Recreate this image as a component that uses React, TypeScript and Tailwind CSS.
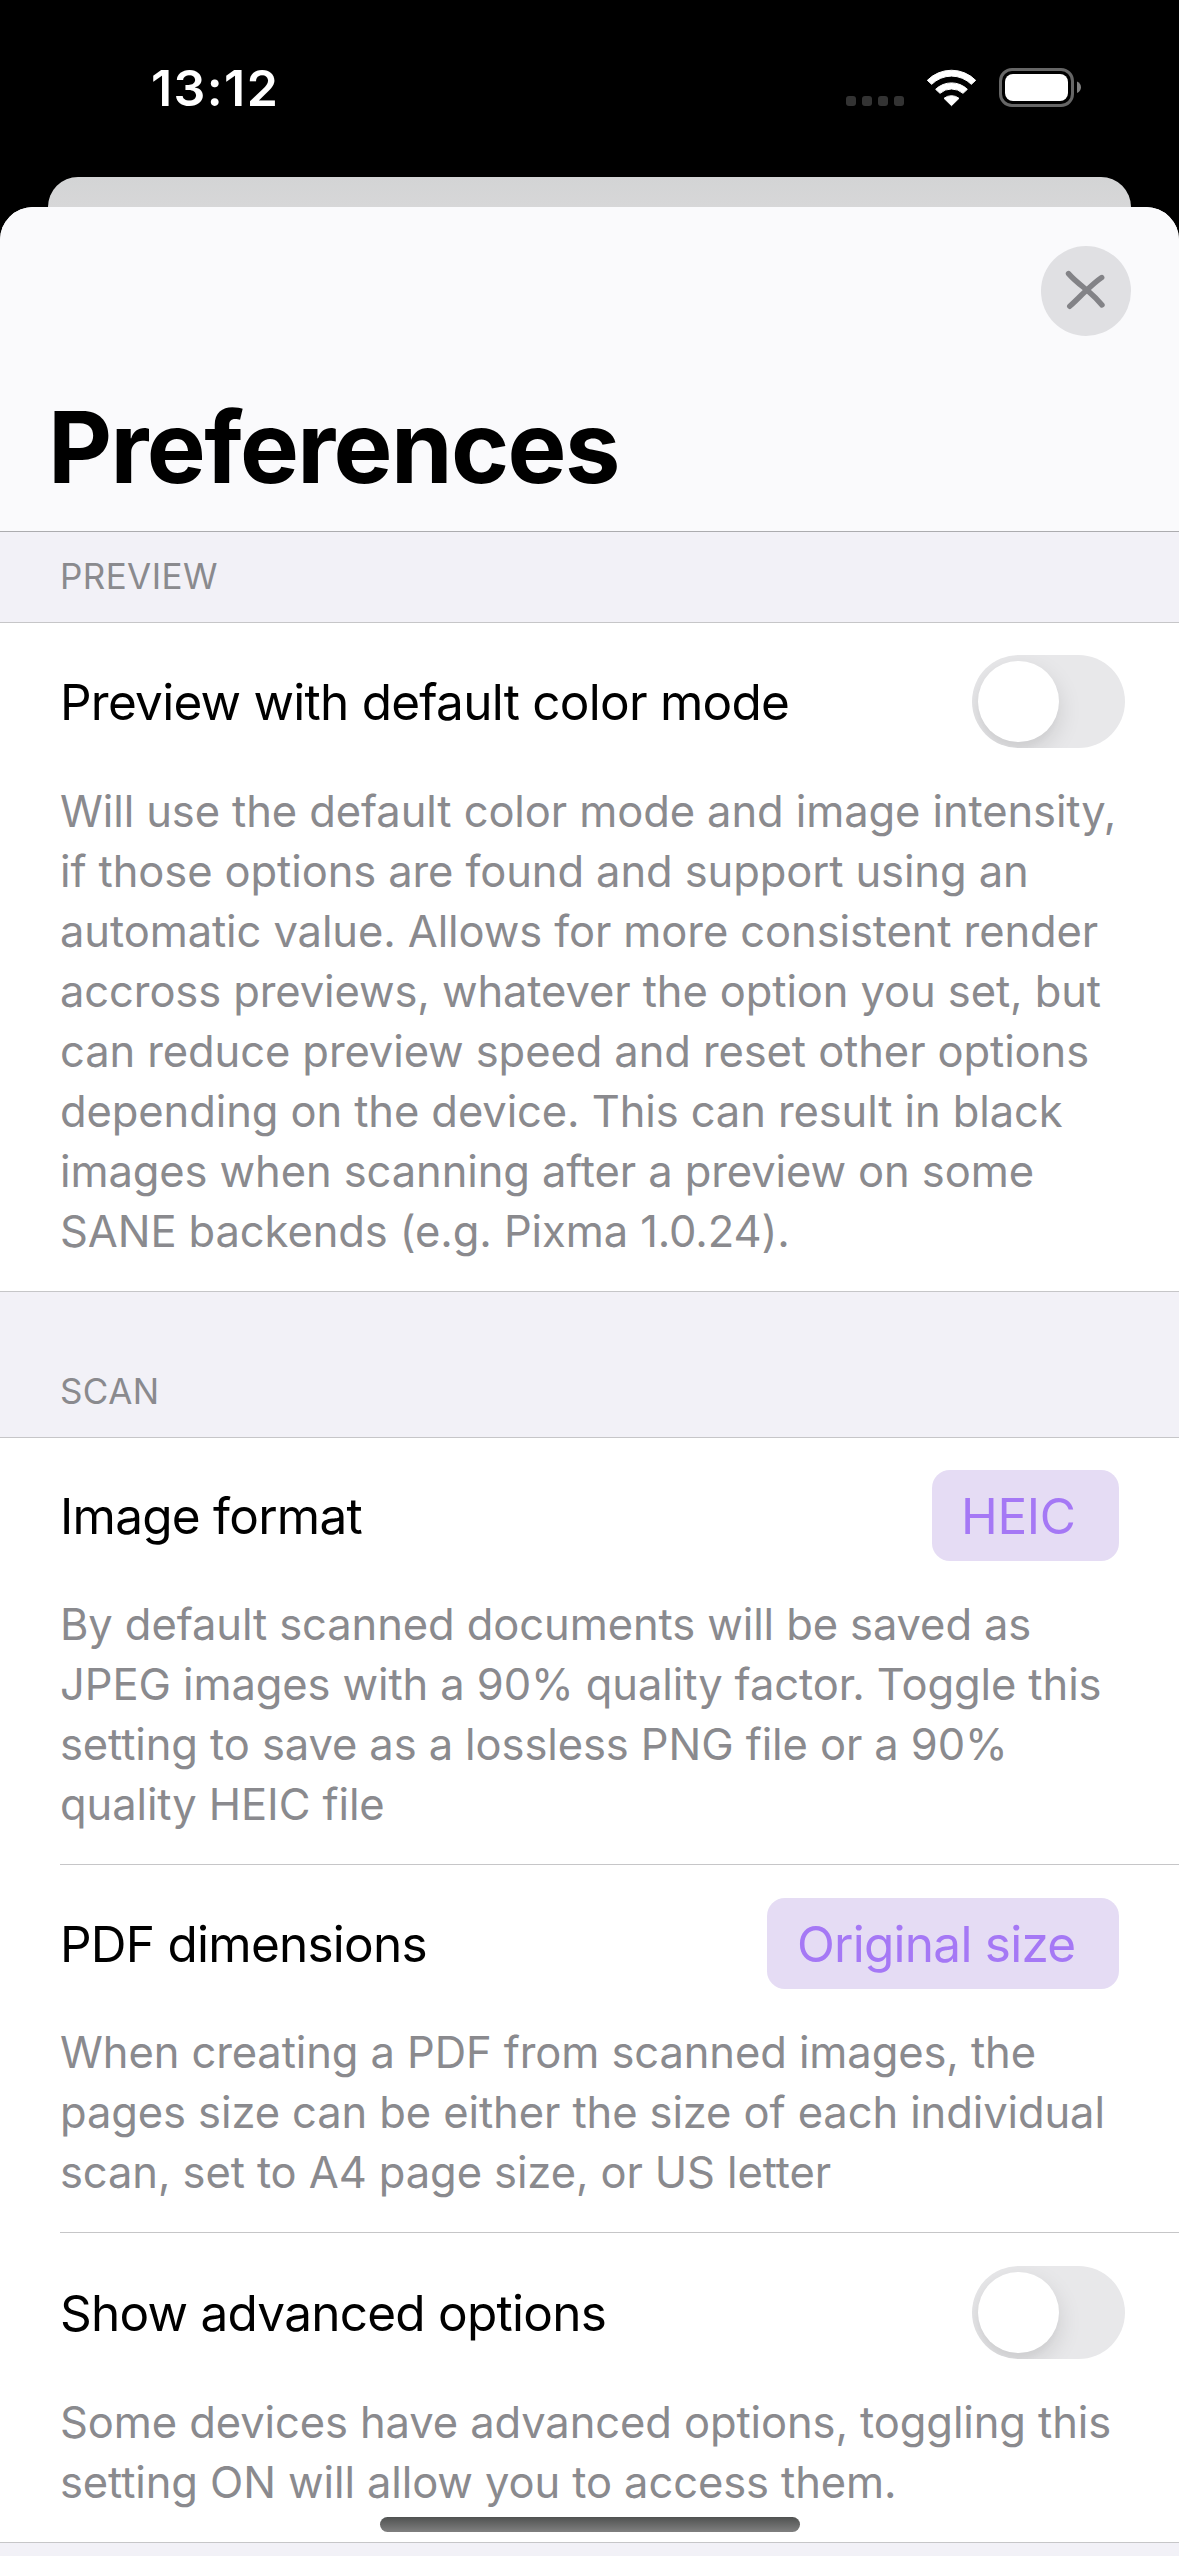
import type { ReactNode } from 'react';

function StatusBar() {
  return (
    <div className="flex h-[177px] items-start justify-between bg-black pl-[151px] pr-[97px] text-white">
      <div className="mt-[58px] text-[50px] font-semibold leading-[60px] tracking-[1.4px]">13:12</div>
      <div className="mt-[66px] flex h-[44px] items-start">
        <div className="mt-[30px] flex gap-[6px]">
          {[0, 1, 2, 3].map((dot) => (
            <span key={dot} className="size-[10px] rounded-[3px] bg-[#333333]" />
          ))}
        </div>
        <svg className="ml-[22px] mt-[2px]" width="51" height="40" viewBox="0 0 153 120">
          <g fill="#fff" stroke="#fff" strokeWidth="3" strokeLinejoin="round">
            <path d="M4 37A102 102 0 0 1 149 37L136 49A84 84 0 0 0 17 49Z" />
            <path d="M29 64A68 68 0 0 1 124 64L111 76A52 52 0 0 0 42 76Z" />
            <path d="M54 91A36 36 0 0 1 99 91L76.500 113Z" />
          </g>
        </svg>
        <svg className="ml-[22px] mt-[2px]" width="83" height="40" viewBox="0 0 83 40">
          <rect x="1.500" y="1.500" width="72" height="36" rx="11.500" fill="none" stroke="#666666" strokeWidth="3" />
          <rect x="6" y="6" width="63" height="27" rx="8" fill="#fff" />
          <path d="M78 13.500C80.800 14.500 82 17 82 19.300S80.800 24 78 25Z" fill="#808080" />
        </svg>
      </div>
    </div>
  );
}

function CloseButton() {
  return (
    <button className="flex size-[90px] items-center justify-center rounded-full bg-[#e0e0e3]" aria-label="Close">
      <svg width="90" height="90" viewBox="0 0 90 90" fill="none" stroke="#838387" strokeWidth="5.400" strokeLinecap="round">
        <path d="M27.500 27.600C34 35 41 40 48 45.800C52.500 49.600 57 54 61 59" />
        <path d="M60.700 31.500C54 36 47 43 41 48.500C37 52.500 33 56.500 28.700 60.300" />
      </svg>
    </button>
  );
}

function Toggle() {
  return (
    <button role="switch" aria-checked="false" className="flex h-[93px] w-[153px] items-center overflow-hidden rounded-full bg-[#e8e8ea] pl-[6px]">
      <span className="size-[81px] rounded-full bg-white shadow-[0_9px_24px_rgba(0,0,0,0.12),0_6px_6px_rgba(0,0,0,0.02)]" />
    </button>
  );
}

function Pill({ className, children }: { className: string; children: ReactNode }) {
  return (
    <button
      className={`${className} mr-[6px] flex h-[91px] items-center whitespace-nowrap rounded-[18px] bg-[#e5dcf4] text-[49.500px] leading-[60px] text-[#a578f5]`}
    >
      {children}
    </button>
  );
}

function SectionHeader({ className, children }: { className: string; children: string }) {
  return (
    <h2 className={`${className} flex items-end bg-[#f2f1f7] pb-[24px] pl-[60px] text-[35px] leading-[44px] tracking-[0.4px] text-[#8a8a8e]`}>
      {children}
    </h2>
  );
}

function Row({ title, control, lines, className = 'pt-[32px]' }: { title: string; control: ReactNode; lines: string[]; className?: string }) {
  return (
    <div className={`${className} pb-[30px]`}>
      <div className="flex items-center justify-between pr-[54px]">
        <span className="text-[49.500px] leading-[60px] tracking-[-0.75px] text-black">{title}</span>
        {control}
      </div>
      <p className="mt-[33px] text-[43.500px] leading-[60px] tracking-[-0.1px] text-[#8a8a8e]">
        {lines.map((line) => (
          <span key={line} className="block whitespace-nowrap">
            {line}
          </span>
        ))}
      </p>
    </div>
  );
}

const Separator = () => <div className="h-px bg-[#c6c6c8]" />;

export default function App() {
  return (
    <div className="relative h-[2556px] w-[1179px] overflow-hidden bg-black font-['Inter',sans-serif]">
      <StatusBar />
      <div className="mx-[48px] h-[30px] rounded-t-[30px] bg-gradient-to-b from-[#d3d4d5] to-[#d7d7d8]" />
      <main className="overflow-hidden rounded-t-[33px] bg-white">
        <header className="flex h-[324px] flex-col bg-[#fafafc] pl-[48px] pr-[48px] pt-[39px]">
          <div className="flex justify-end">
            <CloseButton />
          </div>
          <h1 className="mt-[51px] text-[99px] font-bold leading-[120px] tracking-[-1.6px] text-black">Preferences</h1>
        </header>
        <div className="h-px bg-[#acacaf]" />
        <SectionHeader className="h-[90px]">PREVIEW</SectionHeader>
        <Separator />
        <div className="pl-[60px]">
          <Row
            title="Preview with default color mode"
            control={<Toggle />}
            lines={[
              'Will use the default color mode and image intensity,',
              'if those options are found and support using an',
              'automatic value. Allows for more consistent render',
              'accross previews, whatever the option you set, but',
              'can reduce preview speed and reset other options',
              'depending on the device. This can result in black',
              'images when scanning after a preview on some',
              'SANE backends (e.g. Pixma 1.0.24).',
            ]}
          />
        </div>
        <Separator />
        <SectionHeader className="h-[145px]">SCAN</SectionHeader>
        <Separator />
        <div className="pl-[60px]">
          <Row
            title="Image format"
            control={<Pill className="w-[187px] pl-[29px] tracking-[-0.4px]">HEIC</Pill>}
            lines={[
              'By default scanned documents will be saved as',
              'JPEG images with a 90% quality factor. Toggle this',
              'setting to save as a lossless PNG file or a 90%',
              'quality HEIC file',
            ]}
          />
          <Separator />
          <Row
            className="pt-[33px]"
            title="PDF dimensions"
            control={<Pill className="w-[352px] pl-[30px] tracking-[-0.75px]">Original size</Pill>}
            lines={[
              'When creating a PDF from scanned images, the',
              'pages size can be either the size of each individual',
              'scan, set to A4 page size, or US letter',
            ]}
          />
          <Separator />
          <Row
            className="pt-[33px]"
            title="Show advanced options"
            control={<Toggle />}
            lines={['Some devices have advanced options, toggling this', 'setting ON will allow you to access them.']}
          />
        </div>
        <Separator />
        <div className="h-[13px] bg-[#f2f1f7]" />
      </main>
      <div className="absolute bottom-[24px] left-[380px] h-[15px] w-[420px] rounded-full bg-gradient-to-b from-[#505251] to-[#808080]" />
    </div>
  );
}
